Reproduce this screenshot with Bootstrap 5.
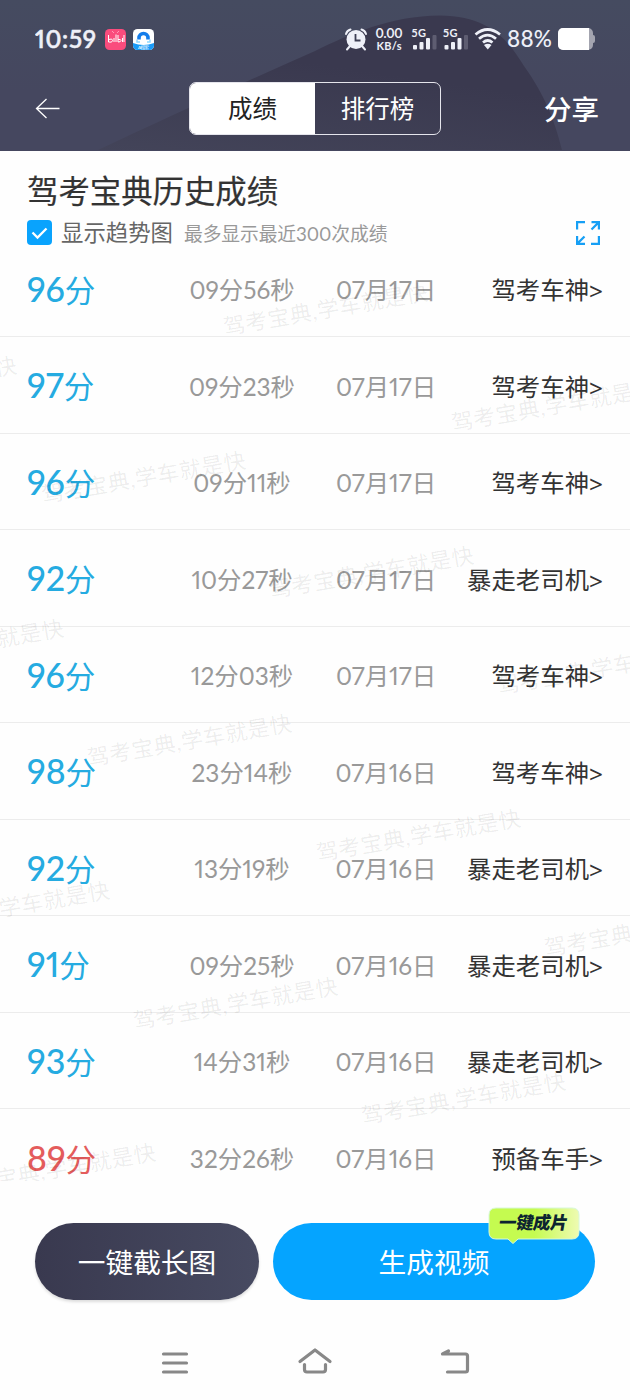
<!DOCTYPE html>
<html lang="zh-CN">
<head>
<meta charset="utf-8">
<meta name="viewport" content="width=device-width, initial-scale=1">
<title>驾考宝典历史成绩</title>
<link href="https://cdn.jsdelivr.net/npm/bootstrap@5.3.0/dist/css/bootstrap.min.css" rel="stylesheet">
<style>
  body { font-family: Lato, "Noto Sans CJK SC", sans-serif; background: #fefefe; color: #333; height: 1400px; overflow: hidden; font-variant-numeric: proportional-nums; }
  svg { display: block; flex: none; }
  svg text { font-family: Lato, "Noto Sans CJK SC", sans-serif; }
  .app-head { height: 150.5px; background: linear-gradient(#454b60, #45475f 60%); color: #fff; }
  .head-shape { z-index: 0; }
  .status { height: 78px; padding: 0 35px; }
  .titlebar { height: 60px; padding: 0 31px 0 35px; }
  .tabs { width: 252px; height: 53px; margin-left: 128px; border: 1px solid #e5e5ec; border-radius: 7px; overflow: hidden; font-size: 24.5px; }
  .tabs > div { padding-top: 2px; }
  .tab-on { background: #fff; color: #222; }
  .share { font-size: 27.5px; font-weight: 500; line-height: 1; padding-top: 3px; }
  .summary { height: 90px; padding: 20px 27px 0; }
  .summary h1 { font-size: 31.4px; line-height: 40px; margin: 0; font-weight: 400; -webkit-text-stroke: .2px #333; }
  .trend { height: 44px; }
  .check { width: 25px; height: 25px; border-radius: 4px; background: #09a3fd; }
  .trend-name { font-size: 22.4px; color: #666; margin-left: 9px; line-height: 30px; padding-top: 1px; }
  .trend-tip { font-size: 18.8px; color: #999; margin-left: 11px; line-height: 30px; letter-spacing: -.1px; padding-top: 3px; }
  .records { height: 939.5px; overflow: hidden; }
  .rec { height: 96.5px; padding: 4px 27px 0 27px; border-bottom: 1px solid #ececec; display: grid; grid-template-columns: 146px 138px 150px 1fr; align-items: center; font-size: 24.4px; line-height: 36px; white-space: nowrap; }
  .rec:last-child { border: 0; }
  .pt { color: #25abe1; font-size: 30.5px; margin-top: -2px; }
  .pt b { font-weight: 500; font-size: 34px; }
  .pt.low { color: #e45c5c; }
  .muted { color: #999; text-align: center; }
  .rank-link { text-align: right; }
  .rank-link i { font-family: "Noto Sans", sans-serif; font-style: normal; position: relative; top: 1px; }
  .actions { height: 140px; padding: 43px 35px 0; gap: 14px; }
  .pill { height: 77px; border: 0; border-radius: 39px; font-size: 27.7px; color: #fff; line-height: 1; padding-top: 3px; }
  .pill-dark { width: 224px; background: linear-gradient(90deg, #39394f, #474a61); box-shadow: 0 2px 3px #0002; }
  .pill-blue { background: #05a4ff; }
  .tip { top: -16px; right: 15px; }
  .navkeys { height: 70px; padding: 25px 160px 0; }
</style>
</head>
<body>
<header class="app-head position-relative">
  <svg class="head-shape position-absolute top-0 start-0" width="630" height="150">
    <defs><linearGradient id="hg" x1="0" y1="1" x2=".35" y2=".3"><stop offset="0" stop-color="#434459"/><stop offset="1" stop-color="#3a394f"/></linearGradient></defs>
    <path d="M98 150 C160 121 240 84 315 51 C350 34 390 16 440 15.500 C490 16 508 40 524 66 C544 94 554 118 562 150Z" fill="url(#hg)"/>
  </svg>
  <div class="status position-relative d-flex align-items-center">
    <svg width="120" height="30" viewBox="35 24 120 30">
      <text x="35" y="48" font-size="24" font-weight="600" fill="#eef0f8" stroke="#eef0f8" stroke-width=".5" textLength="61">10:59</text>
      <rect x="105" y="29" width="21" height="21" rx="4.500" fill="#fa4c7d"/>
      <path d="M112 31l2 2m5-2l-2 2" stroke="#ff9bb8"/>
      <path d="M108.500 35v7q4 1 4-1.500t-3.500-1M114 38v4M116 34.500v7.500M118 35v7q3 0 3-1.500t-3-1M122.500 38v4M124 35v7" fill="none" stroke="#fff" stroke-width="1"/>
      <rect x="133" y="29" width="21" height="21" rx="4.500" fill="#fff"/>
      <path d="M133 43q10.500 4 21 0v2.500a4.500 4.500 0 0 1-4.500 4.500h-12a4.500 4.500 0 0 1-4.500-4.500z" fill="#199bf8"/>
      <path d="M139 39.500v-1.500a4.500 4.500 0 0 1 9 0v1.500" fill="none" stroke="#147deb" stroke-width="3.600"/>
      <path d="M137 39.500v2.500h3m7 0h3v-2.500" fill="none" stroke="#8dd7ff" stroke-width="1.500"/>
      <text x="138" y="49" font-size="4.500" fill="#fff" textLength="11">AI搜索</text>
    </svg>
    <svg class="ms-auto" width="254" height="32" viewBox="341 23 254 32">
      <g fill="#eef0f8" font-weight="700">
        <circle cx="356" cy="39.500" r="9.500"/>
        <path d="M346 34q1-3.500 4.500-4.500M366 34q-1-3.500-4.500-4.500M350 46l-3 3.500M362 46l3 3.500" fill="none" stroke="#eef0f8" stroke-width="2" stroke-linecap="round"/>
        <path d="M355.500 34v6.500h5" fill="none" stroke="#3d3e54" stroke-width="1.800"/>
        <text x="375.500" y="38" font-size="12.500" textLength="27">0.00</text>
        <text x="376.500" y="50" font-size="11" textLength="25">KB/s</text>
        <text x="411.500" y="37" font-size="11" textLength="14.500">5G</text>
        <text x="443" y="37" font-size="11" textLength="14.500">5G</text>
        <g id="sig"><rect x="413" y="45" width="4" height="4.500" rx="1"/><rect x="419.500" y="42" width="4" height="7.500" rx="1"/><rect x="426" y="38" width="4" height="11.500" rx="1"/><rect x="432.500" y="35" width="4" height="14.500" rx="1" opacity=".2"/></g>
        <use href="#sig" x="31.500"/>
        <g fill="none" stroke="#eef0f8" stroke-width="2.700"><path d="M475.500 34.500q12-10 24.500 0M479 38.800q8.500-7.500 17 0M483 42.500q4.700-4 9.500 0"/></g>
        <path d="M484 45q3.700-2.500 7.500 0l-3.700 4.500z"/>
      </g>
      <text x="507" y="47" font-size="22.500" font-weight="500" fill="#eef0f8" textLength="45">88%</text>
      <path d="M563 28h25a5 5 0 0 1 5 5v2q2 0 2 2v4q0 2-2 2v2a5 5 0 0 1-5 5h-25a5 5 0 0 1-5-5v-12a5 5 0 0 1 5-5z" fill="#a3a4af"/>
      <path d="M563 28h26v22h-26a5 5 0 0 1-5-5v-12a5 5 0 0 1 5-5z" fill="#fff"/>
    </svg>
  </div>
  <div class="titlebar position-relative d-flex align-items-center">
    <svg width="26" height="22" viewBox="0 0 26 22" fill="none" stroke="#fff" stroke-width="1.300"><path d="M24.500 11.500H1.500M11.500 2L1.500 11.500l10 9.500"/></svg>
    <div class="tabs d-flex text-center align-items-stretch">
      <div class="tab-on w-50 d-flex align-items-center justify-content-center">成绩</div>
      <div class="w-50 d-flex align-items-center justify-content-center">排行榜</div>
    </div>
    <span class="share ms-auto">分享</span>
  </div>
</header>

<main class="position-relative">
  <section class="summary">
    <h1>驾考宝典历史成绩</h1>
    <div class="trend d-flex align-items-center">
      <span class="check d-flex align-items-center justify-content-center"><svg width="17" height="14" fill="none" stroke="#fff" stroke-width="2.300"><path d="M1.500 6.500l5 5 9-9"/></svg></span>
      <span class="trend-name">显示趋势图</span>
      <span class="trend-tip">最多显示最近300次成绩</span>
      <svg class="ms-auto" width="27" height="24" fill="none" stroke="#169ff5" stroke-width="2.200"><path d="M1.100 8.500V1.100H9M15.500 1.100h7.400V8.500M22.900 1.100L15.500 8.500M1.100 15v7.900H9M1.100 22.900L8.500 15.500M22.900 15v7.900H15"/></svg>
    </div>
  </section>

  <section class="records">
    <div class="rec"><span class="pt"><b>96</b>分</span><span class="muted">09分56秒</span><span class="muted">07月17日</span><span class="rank-link">驾考车神<i>&gt;</i></span></div>
    <div class="rec"><span class="pt"><b>97</b>分</span><span class="muted">09分23秒</span><span class="muted">07月17日</span><span class="rank-link">驾考车神<i>&gt;</i></span></div>
    <div class="rec"><span class="pt"><b>96</b>分</span><span class="muted">09分11秒</span><span class="muted">07月17日</span><span class="rank-link">驾考车神<i>&gt;</i></span></div>
    <div class="rec"><span class="pt"><b>92</b>分</span><span class="muted">10分27秒</span><span class="muted">07月17日</span><span class="rank-link">暴走老司机<i>&gt;</i></span></div>
    <div class="rec"><span class="pt"><b>96</b>分</span><span class="muted">12分03秒</span><span class="muted">07月17日</span><span class="rank-link">驾考车神<i>&gt;</i></span></div>
    <div class="rec"><span class="pt"><b>98</b>分</span><span class="muted">23分14秒</span><span class="muted">07月16日</span><span class="rank-link">驾考车神<i>&gt;</i></span></div>
    <div class="rec"><span class="pt"><b>92</b>分</span><span class="muted">13分19秒</span><span class="muted">07月16日</span><span class="rank-link">暴走老司机<i>&gt;</i></span></div>
    <div class="rec"><span class="pt"><b>91</b>分</span><span class="muted">09分25秒</span><span class="muted">07月16日</span><span class="rank-link">暴走老司机<i>&gt;</i></span></div>
    <div class="rec"><span class="pt"><b>93</b>分</span><span class="muted">14分31秒</span><span class="muted">07月16日</span><span class="rank-link">暴走老司机<i>&gt;</i></span></div>
    <div class="rec"><span class="pt low"><b>89</b>分</span><span class="muted">32分26秒</span><span class="muted">07月16日</span><span class="rank-link">预备车手<i>&gt;</i></span></div>
  </section>

  <!-- diagonal watermark over the list -->
  <svg class="position-absolute top-0 start-0 pe-none" width="630" height="1030" viewBox="0 150 630 1030" fill="#000" fill-opacity=".075" font-size="22">
    <defs><text id="wm" transform="rotate(-9.800)" x="0" y="-2" textLength="207">驾考宝典,学车就是快</text></defs>
    <use href="#wm" x="225" y="336"/><use href="#wm" x="453" y="432"/>
    <use href="#wm" x="-186" y="409"/><use href="#wm" x="43" y="504"/><use href="#wm" x="271" y="599"/><use href="#wm" x="499" y="695"/>
    <use href="#wm" x="-139" y="672"/><use href="#wm" x="89" y="767"/><use href="#wm" x="318" y="862"/><use href="#wm" x="546" y="957"/>
    <use href="#wm" x="-93" y="934"/><use href="#wm" x="135" y="1030"/><use href="#wm" x="363" y="1125"/>
    <use href="#wm" x="-47" y="1196"/>
  </svg>
</main>

<footer>
  <div class="actions d-flex">
    <button class="pill pill-dark flex-shrink-0">一键截长图</button>
    <button class="pill pill-blue flex-grow-1 position-relative">生成视频
      <svg class="tip position-absolute" width="92" height="38" viewBox="0 0 92 38">
        <defs><linearGradient id="tg"><stop offset=".5" stop-color="#c5fb50"/><stop offset="1" stop-color="#eefbb2"/></linearGradient></defs>
        <path d="M8 1H84q7 0 7 7V25q0 7-7 7H30l-5 4.500-5-4.500H8q-7 0-7-7V8q0-7 7-7z" fill="url(#tg)" stroke="#d8f8d8"/>
        <text x="10" y="22.500" font-size="17.500" font-weight="900" fill="#0c2430" textLength="69" transform="translate(4 0) skewX(-10)">一键成片</text>
      </svg>
    </button>
  </div>
  <nav class="navkeys d-flex justify-content-between" aria-label="系统导航">
    <svg width="30" height="34" fill="none" stroke="#888" stroke-width="3.200" stroke-linecap="round"><path d="M3.500 9h23M3.500 18h23M3.500 27h23"/></svg>
    <svg width="36" height="34" fill="none" stroke="#888" stroke-width="3.200" stroke-linecap="round" stroke-linejoin="round"><path d="M3 16.500L18 5l15 11.500M7.500 19.500v5q0 2.500 2.500 2.500h16q2.500 0 2.500-2.500v-5"/></svg>
    <svg width="30" height="34" fill="none" stroke="#888" stroke-width="3.200" stroke-linecap="round" stroke-linejoin="round"><path d="M8.500 6L2.500 9H25.500q2 0 2 2v14q0 2-2 2H7.500"/></svg>
  </nav>
</footer>
<script src="https://cdn.jsdelivr.net/npm/bootstrap@5.3.0/dist/js/bootstrap.bundle.min.js"></script>
</body>
</html>
